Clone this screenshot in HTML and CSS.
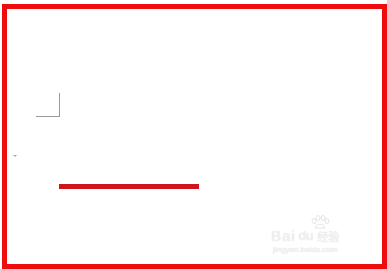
FILE: index.html
```html
<!DOCTYPE html>
<html>
<head>
<meta charset="utf-8">
<link rel="stylesheet" href="styles.css">
</head>
<body>
<div class="frame">
  <div class="page">
    <div class="corner"></div>
    <div class="arrow"></div>
    <div class="redline"></div>
  </div>
  <div class="watermark">
    <svg class="paw" width="22" height="14" viewBox="0 0 22 14">
      <g fill="none" stroke="#e4e4e4" stroke-width="1">
        <ellipse cx="5" cy="6" rx="2" ry="2.5"/>
        <ellipse cx="9" cy="3" rx="2" ry="2.5"/>
        <ellipse cx="14" cy="3" rx="2" ry="2.5"/>
        <ellipse cx="18" cy="6" rx="2" ry="2.5"/>
        <path d="M6 13 C7 8 15 8 16 13 Z"/>
      </g>
    </svg>
    <div class="wm-row"><span class="bai">Bai</span><span class="du">du</span><span class="jy">经验</span></div>
    <div class="wm-url">jingyan.baidu.com</div>
  </div>
</div>
</body>
</html>
```
FILE: styles.css
```css
html, body {
  margin: 0;
  padding: 0;
  background: #ffffff;
  width: 387px;
  height: 269px;
  overflow: hidden;
}
.frame {
  position: relative;
  box-sizing: border-box;
  margin: 4px 0 0 2px;
  width: 385px;
  height: 265px;
  border: 5px solid #ee0c0c;
  background: #fff;
}
.page {
  display: flex;
  flex-direction: column;
  align-items: flex-start;
}
.corner {
  margin: 84px 0 0 29px;
  width: 23px;
  height: 23px;
  border-right: 1px solid #9a9a9a;
  border-bottom: 1px solid #9a9a9a;
}
.arrow {
  margin: 38px 0 0 6px;
  width: 0;
  height: 0;
  border-left: 2px solid transparent;
  border-right: 2px solid transparent;
  border-top: 2px solid #a8a8b0;
}
.redline {
  margin: 27px 0 0 52px;
  width: 140px;
  height: 5px;
  background: #d0141b;
}
.watermark {
  position: absolute;
  left: 264px;
  top: 206px;
  width: 90px;
  font-family: "Liberation Sans", Arial, sans-serif;
  color: #f1f1f1;
  text-shadow: 0 0 1px #d8d8d8;
}
.paw {
  display: block;
  margin-left: 38px;
}
.wm-row {
  display: flex;
  align-items: center;
  height: 14px;
  font-size: 15px;
  line-height: 14px;
}
.bai { letter-spacing: 1px; }
.du { margin-left: 3px; font-size: 13px; }
.jy { margin-left: 4px; font-size: 11px; font-family: "Noto Sans CJK SC", sans-serif; }
.wm-url {
  margin-top: 2px;
  font-size: 8px;
  line-height: 9px;
  margin-left: 2px;
}
```
